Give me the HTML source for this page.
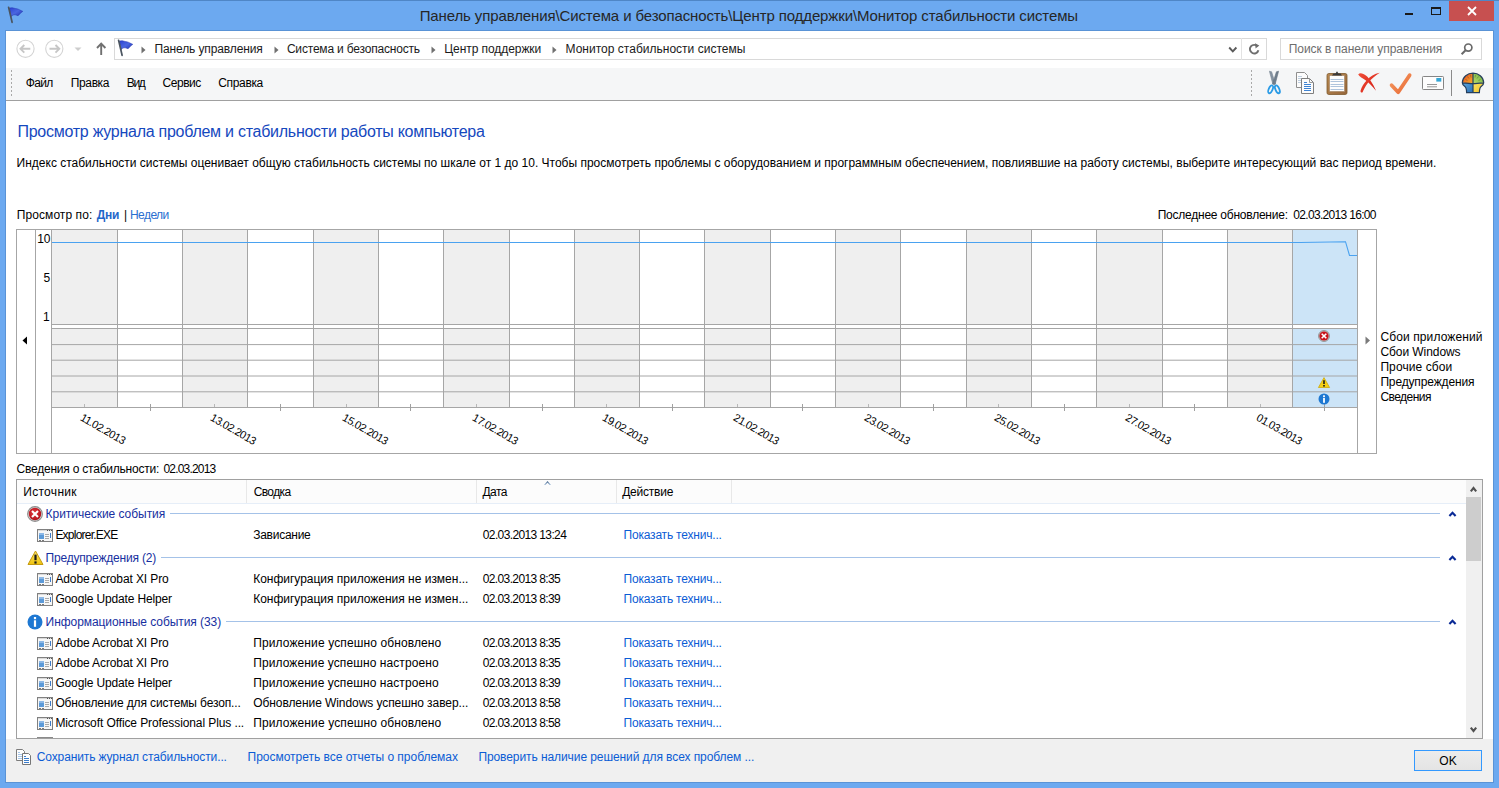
<!DOCTYPE html><html><head><meta charset="utf-8"><style>
html,body{margin:0;padding:0}
body{width:1499px;height:788px;overflow:hidden;position:relative;background:#6CA9F0;font-family:"Liberation Sans",sans-serif}
.t{position:absolute;white-space:nowrap}
.r{position:absolute}
svg{position:absolute;overflow:visible}
</style></head><body>
<div class="r" style="left:0px;top:0px;width:1499px;height:1px;background:#4F86C6;"></div>
<div class="r" style="left:5px;top:30px;width:1489px;height:753px;background:#5A93D6;"></div>
<div class="r" style="left:6px;top:31px;width:1487px;height:751px;background:#FFFFFF;"></div>
<svg style="left:4px;top:5px" width="20" height="20" viewBox="0 0 20 20">
<defs><linearGradient id="fg1" x1="0" y1="0" x2="1" y2="1"><stop offset="0" stop-color="#2C42D2"/><stop offset="0.5" stop-color="#4A66E0"/><stop offset="1" stop-color="#1E2FB0"/></linearGradient></defs>
<path d="M5.3 3.3 C7.5 2.5 8.5 2.8 10 3.2 C12 3.8 13.5 3.5 15.5 4.8 C17.5 5.8 18 6 18.8 6.3 C17 7.5 15.5 9.5 14 10.7 C12.5 10.3 11.5 9.6 10 9.8 C8.5 10 7.8 11.3 7 11.5 Z" fill="url(#fg1)" stroke="#2233B0" stroke-width="0.5"/>
<path d="M4.6 2.3 L8.1 17.3" stroke="#4B5560" stroke-width="1.7" stroke-linecap="round"/>
</svg>
<div class="t" style="left:419.70px;top:8px;font-size:15px;line-height:15px;color:#262626;letter-spacing:-0.119px;">Панель управления\Система и безопасность\Центр поддержки\Монитор стабильности системы</div>
<div class="r" style="left:1405px;top:13px;width:8px;height:2px;background:#1A1A1A;"></div>
<div class="r" style="left:1431px;top:7px;width:10px;height:8px;background:transparent;box-sizing:border-box;border:1px solid #1A1A1A;border-top-width:2px"></div>
<div class="r" style="left:1449px;top:1px;width:45px;height:20px;background:#C75050;"></div>
<svg style="left:1466px;top:6px" width="12" height="10" viewBox="0 0 12 10">
<path d="M2 1 L10 9 M10 1 L2 9" stroke="#fff" stroke-width="1.8"/></svg>
<svg style="left:15px;top:39px" width="20" height="20" viewBox="0 0 20 20">
<circle cx="10.5" cy="9.8" r="8.6" fill="none" stroke="#D4D4D4" stroke-width="1.1"/>
<path d="M5.5 9.8 H15.3 M9.3 6 L5.5 9.8 L9.3 13.6" fill="none" stroke="#C6C6C6" stroke-width="1.9"/></svg>
<svg style="left:44px;top:39px" width="20" height="20" viewBox="0 0 20 20">
<circle cx="10.3" cy="9.8" r="8.6" fill="none" stroke="#D4D4D4" stroke-width="1.1"/>
<path d="M5.5 9.8 H15.3 M11.5 6 L15.3 9.8 L11.5 13.6" fill="none" stroke="#C6C6C6" stroke-width="1.9"/></svg>
<svg style="left:74px;top:47px" width="9" height="5" viewBox="0 0 9 5"><path d="M0.5 0.5 H7.5 L4 4 Z" fill="#CDCDCD"/></svg>
<svg style="left:96px;top:42px" width="11" height="14" viewBox="0 0 11 14">
<path d="M5.2 13 V2 M1 6 L5.2 1.6 L9.4 6" fill="none" stroke="#707070" stroke-width="1.9"/></svg>
<div class="r" style="left:114px;top:38px;width:1153px;height:22px;background:#fff;box-sizing:border-box;border:1px solid #D9D9D9"></div>
<div class="r" style="left:1241px;top:38px;width:1px;height:22px;background:#E3E3E3;"></div>
<svg style="left:114px;top:38px" width="20" height="20" viewBox="0 0 20 20">
<defs><linearGradient id="fg2" x1="0" y1="0" x2="1" y2="1"><stop offset="0" stop-color="#2C42D2"/><stop offset="0.5" stop-color="#4A66E0"/><stop offset="1" stop-color="#1E2FB0"/></linearGradient></defs>
<path d="M5.3 3.3 C7.5 2.5 8.5 2.8 10 3.2 C12 3.8 13.5 3.5 15.5 4.8 C17.5 5.8 18 6 18.8 6.3 C17 7.5 15.5 9.5 14 10.7 C12.5 10.3 11.5 9.6 10 9.8 C8.5 10 7.8 11.3 7 11.5 Z" fill="url(#fg2)" stroke="#2233B0" stroke-width="0.5"/>
<path d="M4.6 2.3 L8.1 17.3" stroke="#4B5560" stroke-width="1.7" stroke-linecap="round"/>
</svg>
<svg style="left:141px;top:46px" width="6" height="8" viewBox="0 0 6 8"><path d="M0.5 0.5 L4.5 4 L0.5 7.5 Z" fill="#707070"/></svg>
<svg style="left:274px;top:46px" width="6" height="8" viewBox="0 0 6 8"><path d="M0.5 0.5 L4.5 4 L0.5 7.5 Z" fill="#707070"/></svg>
<svg style="left:431px;top:46px" width="6" height="8" viewBox="0 0 6 8"><path d="M0.5 0.5 L4.5 4 L0.5 7.5 Z" fill="#707070"/></svg>
<svg style="left:552px;top:46px" width="6" height="8" viewBox="0 0 6 8"><path d="M0.5 0.5 L4.5 4 L0.5 7.5 Z" fill="#707070"/></svg>
<div class="t" style="left:154.50px;top:43px;font-size:12px;line-height:12px;color:#1A1A1A;letter-spacing:-0.119px;">Панель управления</div>
<div class="t" style="left:286.90px;top:43px;font-size:12px;line-height:12px;color:#1A1A1A;letter-spacing:-0.186px;">Система и безопасность</div>
<div class="t" style="left:444.30px;top:43px;font-size:12px;line-height:12px;color:#1A1A1A;letter-spacing:-0.071px;">Центр поддержки</div>
<div class="t" style="left:565.50px;top:43px;font-size:12px;line-height:12px;color:#1A1A1A;letter-spacing:0.015px;">Монитор стабильности системы</div>
<svg style="left:1228px;top:46px" width="10" height="8" viewBox="0 0 10 8"><path d="M1.2 1.5 L4.8 5.3 L8.4 1.5" fill="none" stroke="#5A5A5A" stroke-width="1.9"/></svg>
<svg style="left:1248px;top:42px" width="13" height="14" viewBox="0 0 13 14">
<path d="M9.6 4.5 A4.3 4.3 0 1 0 10.4 8.2" fill="none" stroke="#6E6E6E" stroke-width="1.9"/>
<path d="M7 1.2 L11.3 3.6 L7.6 6.5 Z" fill="#6E6E6E"/></svg>
<div class="r" style="left:1280px;top:38px;width:202px;height:22px;background:#fff;box-sizing:border-box;border:1px solid #D9D9D9"></div>
<div class="t" style="left:1288.70px;top:43px;font-size:12px;line-height:12px;color:#6D6D6D;letter-spacing:-0.050px;">Поиск в панели управления</div>
<svg style="left:1460px;top:42px" width="14" height="14" viewBox="0 0 14 14">
<circle cx="8.3" cy="5.6" r="3.6" fill="none" stroke="#6A6A6A" stroke-width="1.7"/>
<path d="M5.6 8.3 L1.6 12.3" stroke="#6A6A6A" stroke-width="2"/></svg>
<div class="r" style="left:6px;top:68px;width:1487px;height:32px;background:#F5F6F7;"></div>
<div class="r" style="left:6px;top:100px;width:1487px;height:1px;background:#A0A0A0;"></div>
<div class="r" style="left:11px;top:70px;width:1px;height:2px;background:#A9A9A9;"></div>
<div class="r" style="left:11px;top:74px;width:1px;height:2px;background:#A9A9A9;"></div>
<div class="r" style="left:11px;top:78px;width:1px;height:2px;background:#A9A9A9;"></div>
<div class="r" style="left:11px;top:82px;width:1px;height:2px;background:#A9A9A9;"></div>
<div class="r" style="left:11px;top:86px;width:1px;height:2px;background:#A9A9A9;"></div>
<div class="r" style="left:11px;top:90px;width:1px;height:2px;background:#A9A9A9;"></div>
<div class="r" style="left:11px;top:94px;width:1px;height:2px;background:#A9A9A9;"></div>
<div class="t" style="left:25.80px;top:77px;font-size:12px;line-height:12px;color:#000;letter-spacing:-0.667px;">Файл</div>
<div class="t" style="left:70.80px;top:77px;font-size:12px;line-height:12px;color:#000;letter-spacing:-0.380px;">Правка</div>
<div class="t" style="left:126.70px;top:77px;font-size:12px;line-height:12px;color:#000;letter-spacing:-1.300px;">Вид</div>
<div class="t" style="left:162.50px;top:77px;font-size:12px;line-height:12px;color:#000;letter-spacing:-0.460px;">Сервис</div>
<div class="t" style="left:218.30px;top:77px;font-size:12px;line-height:12px;color:#000;letter-spacing:-0.350px;">Справка</div>
<div class="r" style="left:1251px;top:70px;width:1px;height:2px;background:#A9A9A9;"></div>
<div class="r" style="left:1251px;top:74px;width:1px;height:2px;background:#A9A9A9;"></div>
<div class="r" style="left:1251px;top:78px;width:1px;height:2px;background:#A9A9A9;"></div>
<div class="r" style="left:1251px;top:82px;width:1px;height:2px;background:#A9A9A9;"></div>
<div class="r" style="left:1251px;top:86px;width:1px;height:2px;background:#A9A9A9;"></div>
<div class="r" style="left:1251px;top:90px;width:1px;height:2px;background:#A9A9A9;"></div>
<div class="r" style="left:1251px;top:94px;width:1px;height:2px;background:#A9A9A9;"></div>
<div class="r" style="left:1451px;top:70px;width:1px;height:26px;background:#8A8A8A;"></div>
<div class="t" style="left:17.50px;top:124px;font-size:16px;line-height:16px;color:#1548BE;letter-spacing:-0.263px;">Просмотр журнала проблем и стабильности работы компьютера</div>
<div class="t" style="left:16.60px;top:157px;font-size:12px;line-height:12px;color:#000;letter-spacing:-0.005px;">Индекс стабильности системы оценивает общую стабильность системы по шкале от 1 до 10. Чтобы просмотреть проблемы с оборудованием и программным обеспечением, повлиявшие на работу системы, выберите интересующий вас период времени.</div>
<div class="t" style="left:16.80px;top:209px;font-size:12px;line-height:12px;color:#000;letter-spacing:0.073px;">Просмотр по:</div>
<div class="t" style="left:96.70px;top:209px;font-size:12px;line-height:12px;color:#1F66C9;letter-spacing:-0.250px;font-weight:bold;">Дни</div>
<div class="t" style="left:124.00px;top:209px;font-size:12px;line-height:12px;color:#000;letter-spacing:0.000px;">|</div>
<div class="t" style="left:130.00px;top:209px;font-size:12px;line-height:12px;color:#2A6FD0;letter-spacing:-0.560px;">Недели</div>
<div class="t" style="left:1157.70px;top:209px;font-size:12px;line-height:12px;color:#000;letter-spacing:-0.235px;">Последнее обновление:</div>
<div class="t" style="left:1293.30px;top:209px;font-size:12px;line-height:12px;color:#000;letter-spacing:-0.680px;">02.03.2013 16:00</div>
<div class="r" style="left:16px;top:229px;width:1361px;height:225px;background:#fff;box-sizing:border-box;border:1px solid #A6A6A6"></div>
<div class="r" style="left:35px;top:229px;width:1px;height:225px;background:#A6A6A6;"></div>
<div class="r" style="left:51px;top:229px;width:1px;height:225px;background:#A6A6A6;"></div>
<div class="r" style="left:52px;top:230px;width:65px;height:94px;background:#EFEFEF;"></div>
<div class="r" style="left:52px;top:329px;width:65px;height:78px;background:#EFEFEF;"></div>
<div class="r" style="left:183px;top:230px;width:64px;height:94px;background:#EFEFEF;"></div>
<div class="r" style="left:183px;top:329px;width:64px;height:78px;background:#EFEFEF;"></div>
<div class="r" style="left:314px;top:230px;width:64px;height:94px;background:#EFEFEF;"></div>
<div class="r" style="left:314px;top:329px;width:64px;height:78px;background:#EFEFEF;"></div>
<div class="r" style="left:444px;top:230px;width:65px;height:94px;background:#EFEFEF;"></div>
<div class="r" style="left:444px;top:329px;width:65px;height:78px;background:#EFEFEF;"></div>
<div class="r" style="left:575px;top:230px;width:64px;height:94px;background:#EFEFEF;"></div>
<div class="r" style="left:575px;top:329px;width:64px;height:78px;background:#EFEFEF;"></div>
<div class="r" style="left:705px;top:230px;width:65px;height:94px;background:#EFEFEF;"></div>
<div class="r" style="left:705px;top:329px;width:65px;height:78px;background:#EFEFEF;"></div>
<div class="r" style="left:836px;top:230px;width:64px;height:94px;background:#EFEFEF;"></div>
<div class="r" style="left:836px;top:329px;width:64px;height:78px;background:#EFEFEF;"></div>
<div class="r" style="left:967px;top:230px;width:64px;height:94px;background:#EFEFEF;"></div>
<div class="r" style="left:967px;top:329px;width:64px;height:78px;background:#EFEFEF;"></div>
<div class="r" style="left:1097px;top:230px;width:65px;height:94px;background:#EFEFEF;"></div>
<div class="r" style="left:1097px;top:329px;width:65px;height:78px;background:#EFEFEF;"></div>
<div class="r" style="left:1228px;top:230px;width:64px;height:94px;background:#EFEFEF;"></div>
<div class="r" style="left:1228px;top:329px;width:64px;height:78px;background:#EFEFEF;"></div>
<div class="r" style="left:1293px;top:230px;width:64px;height:94px;background:#CCE4F7;"></div>
<div class="r" style="left:1293px;top:329px;width:64px;height:78px;background:#CCE4F7;"></div>
<div class="r" style="left:117px;top:229px;width:1px;height:178px;background:#A6A6A6;"></div>
<div class="r" style="left:182px;top:229px;width:1px;height:178px;background:#A6A6A6;"></div>
<div class="r" style="left:247px;top:229px;width:1px;height:178px;background:#A6A6A6;"></div>
<div class="r" style="left:313px;top:229px;width:1px;height:178px;background:#A6A6A6;"></div>
<div class="r" style="left:378px;top:229px;width:1px;height:178px;background:#A6A6A6;"></div>
<div class="r" style="left:443px;top:229px;width:1px;height:178px;background:#A6A6A6;"></div>
<div class="r" style="left:509px;top:229px;width:1px;height:178px;background:#A6A6A6;"></div>
<div class="r" style="left:574px;top:229px;width:1px;height:178px;background:#A6A6A6;"></div>
<div class="r" style="left:639px;top:229px;width:1px;height:178px;background:#A6A6A6;"></div>
<div class="r" style="left:704px;top:229px;width:1px;height:178px;background:#A6A6A6;"></div>
<div class="r" style="left:770px;top:229px;width:1px;height:178px;background:#A6A6A6;"></div>
<div class="r" style="left:835px;top:229px;width:1px;height:178px;background:#A6A6A6;"></div>
<div class="r" style="left:900px;top:229px;width:1px;height:178px;background:#A6A6A6;"></div>
<div class="r" style="left:966px;top:229px;width:1px;height:178px;background:#A6A6A6;"></div>
<div class="r" style="left:1031px;top:229px;width:1px;height:178px;background:#A6A6A6;"></div>
<div class="r" style="left:1096px;top:229px;width:1px;height:178px;background:#A6A6A6;"></div>
<div class="r" style="left:1162px;top:229px;width:1px;height:178px;background:#A6A6A6;"></div>
<div class="r" style="left:1227px;top:229px;width:1px;height:178px;background:#A6A6A6;"></div>
<div class="r" style="left:1292px;top:229px;width:1px;height:178px;background:#A6A6A6;"></div>
<div class="r" style="left:1357px;top:229px;width:1px;height:178px;background:#A6A6A6;"></div>
<div class="r" style="left:1357px;top:229px;width:1px;height:225px;background:#A6A6A6;"></div>
<div class="r" style="left:52px;top:324px;width:1305px;height:1px;background:#A6A6A6;"></div>
<div class="r" style="left:52px;top:328px;width:1305px;height:1px;background:#A6A6A6;"></div>
<svg style="left:0;top:0" width="1499" height="788" viewBox="0 0 1499 788"><line x1="52" x2="1357" y1="344.6" y2="344.6" stroke="#A6A6A6" stroke-width="1"/><line x1="52" x2="1357" y1="360.2" y2="360.2" stroke="#A6A6A6" stroke-width="1"/><line x1="52" x2="1357" y1="376.0" y2="376.0" stroke="#A6A6A6" stroke-width="1"/><line x1="52" x2="1357" y1="391.8" y2="391.8" stroke="#A6A6A6" stroke-width="1"/></svg>
<div class="r" style="left:52px;top:407px;width:1305px;height:1px;background:#A6A6A6;"></div>
<div class="r" style="left:84px;top:404px;width:1px;height:3px;background:#B8B8B8;"></div>
<div class="r" style="left:150px;top:404px;width:1px;height:7px;background:#A0A0A0;"></div>
<div class="r" style="left:214px;top:404px;width:1px;height:3px;background:#B8B8B8;"></div>
<div class="r" style="left:280px;top:404px;width:1px;height:7px;background:#A0A0A0;"></div>
<div class="r" style="left:346px;top:404px;width:1px;height:3px;background:#B8B8B8;"></div>
<div class="r" style="left:410px;top:404px;width:1px;height:7px;background:#A0A0A0;"></div>
<div class="r" style="left:476px;top:404px;width:1px;height:3px;background:#B8B8B8;"></div>
<div class="r" style="left:542px;top:404px;width:1px;height:7px;background:#A0A0A0;"></div>
<div class="r" style="left:606px;top:404px;width:1px;height:3px;background:#B8B8B8;"></div>
<div class="r" style="left:672px;top:404px;width:1px;height:7px;background:#A0A0A0;"></div>
<div class="r" style="left:737px;top:404px;width:1px;height:3px;background:#B8B8B8;"></div>
<div class="r" style="left:802px;top:404px;width:1px;height:7px;background:#A0A0A0;"></div>
<div class="r" style="left:868px;top:404px;width:1px;height:3px;background:#B8B8B8;"></div>
<div class="r" style="left:933px;top:404px;width:1px;height:7px;background:#A0A0A0;"></div>
<div class="r" style="left:998px;top:404px;width:1px;height:3px;background:#B8B8B8;"></div>
<div class="r" style="left:1064px;top:404px;width:1px;height:7px;background:#A0A0A0;"></div>
<div class="r" style="left:1129px;top:404px;width:1px;height:3px;background:#B8B8B8;"></div>
<div class="r" style="left:1194px;top:404px;width:1px;height:7px;background:#A0A0A0;"></div>
<div class="r" style="left:1260px;top:404px;width:1px;height:3px;background:#B8B8B8;"></div>
<div class="r" style="left:1324px;top:404px;width:1px;height:7px;background:#A0A0A0;"></div>
<div class="t" style="left:37.30px;top:233px;font-size:12px;line-height:12px;color:#000;letter-spacing:-0.200px;">10</div>
<div class="t" style="left:43.50px;top:272px;font-size:12px;line-height:12px;color:#000;letter-spacing:0.000px;">5</div>
<div class="t" style="left:43.00px;top:311px;font-size:12px;line-height:12px;color:#000;letter-spacing:0.000px;">1</div>
<svg style="left:0px;top:0px" width="1499" height="788" viewBox="0 0 1499 788">
<polyline points="52,242.5 1300,242.5 1345.5,241.7 1349.5,255.5 1357,255.5" fill="none" stroke="#4AA2F0" stroke-width="1.1"/></svg>
<div class="t" style="left:84px;top:412px;font-size:11px;line-height:11px;color:#000;letter-spacing:-0.45px;transform-origin:0 0;transform:rotate(30deg)">11.02.2013</div>
<div class="t" style="left:214px;top:412px;font-size:11px;line-height:11px;color:#000;letter-spacing:-0.45px;transform-origin:0 0;transform:rotate(30deg)">13.02.2013</div>
<div class="t" style="left:346px;top:412px;font-size:11px;line-height:11px;color:#000;letter-spacing:-0.45px;transform-origin:0 0;transform:rotate(30deg)">15.02.2013</div>
<div class="t" style="left:476px;top:412px;font-size:11px;line-height:11px;color:#000;letter-spacing:-0.45px;transform-origin:0 0;transform:rotate(30deg)">17.02.2013</div>
<div class="t" style="left:606px;top:412px;font-size:11px;line-height:11px;color:#000;letter-spacing:-0.45px;transform-origin:0 0;transform:rotate(30deg)">19.02.2013</div>
<div class="t" style="left:737px;top:412px;font-size:11px;line-height:11px;color:#000;letter-spacing:-0.45px;transform-origin:0 0;transform:rotate(30deg)">21.02.2013</div>
<div class="t" style="left:868px;top:412px;font-size:11px;line-height:11px;color:#000;letter-spacing:-0.45px;transform-origin:0 0;transform:rotate(30deg)">23.02.2013</div>
<div class="t" style="left:998px;top:412px;font-size:11px;line-height:11px;color:#000;letter-spacing:-0.45px;transform-origin:0 0;transform:rotate(30deg)">25.02.2013</div>
<div class="t" style="left:1129px;top:412px;font-size:11px;line-height:11px;color:#000;letter-spacing:-0.45px;transform-origin:0 0;transform:rotate(30deg)">27.02.2013</div>
<div class="t" style="left:1260px;top:412px;font-size:11px;line-height:11px;color:#000;letter-spacing:-0.45px;transform-origin:0 0;transform:rotate(30deg)">01.03.2013</div>
<svg style="left:22px;top:336px" width="6" height="9" viewBox="0 0 6 9"><path d="M5 0.5 V8.5 L0.5 4.5 Z" fill="#000"/></svg>
<svg style="left:1365px;top:336px" width="6" height="9" viewBox="0 0 6 9"><path d="M0.5 0.5 V8.5 L5 4.5 Z" fill="#7A7A7A"/></svg>
<div class="t" style="left:1380.40px;top:331px;font-size:12px;line-height:12px;color:#000;letter-spacing:0.114px;">Сбои приложений</div>
<div class="t" style="left:1380.40px;top:346px;font-size:12px;line-height:12px;color:#000;letter-spacing:-0.064px;">Сбои Windows</div>
<div class="t" style="left:1380.40px;top:361px;font-size:12px;line-height:12px;color:#000;letter-spacing:0.100px;">Прочие сбои</div>
<div class="t" style="left:1380.40px;top:376px;font-size:12px;line-height:12px;color:#000;letter-spacing:-0.146px;">Предупреждения</div>
<div class="t" style="left:1380.40px;top:391px;font-size:12px;line-height:12px;color:#000;letter-spacing:-0.529px;">Сведения</div>
<div class="t" style="left:16.60px;top:463px;font-size:12px;line-height:12px;color:#000;letter-spacing:-0.226px;">Сведения о стабильности:</div>
<div class="t" style="left:163.40px;top:463px;font-size:12px;line-height:12px;color:#000;letter-spacing:-0.800px;">02.03.2013</div>
<div class="r" style="left:16px;top:479px;width:1467px;height:260px;background:#fff;box-sizing:border-box;border:1px solid #A0A0A0"></div>
<div class="r" style="left:17px;top:480px;width:1449px;height:23px;background:#FCFCFC;"></div>
<div class="r" style="left:17px;top:503px;width:1449px;height:1px;background:#E6EEF8;"></div>
<div class="r" style="left:246px;top:480px;width:1px;height:23px;background:#E8E8E8;"></div>
<div class="r" style="left:476px;top:480px;width:1px;height:23px;background:#E8E8E8;"></div>
<div class="r" style="left:616px;top:480px;width:1px;height:23px;background:#E8E8E8;"></div>
<div class="r" style="left:731px;top:480px;width:1px;height:23px;background:#E8E8E8;"></div>
<div class="t" style="left:23.20px;top:486px;font-size:12px;line-height:12px;color:#000;letter-spacing:0.314px;">Источник</div>
<div class="t" style="left:253.70px;top:486px;font-size:12px;line-height:12px;color:#000;letter-spacing:-0.620px;">Сводка</div>
<div class="t" style="left:482.60px;top:486px;font-size:12px;line-height:12px;color:#000;letter-spacing:-0.600px;">Дата</div>
<div class="t" style="left:622.20px;top:486px;font-size:12px;line-height:12px;color:#000;letter-spacing:-0.229px;">Действие</div>
<svg style="left:543px;top:480px" width="9" height="6" viewBox="0 0 9 6"><defs><linearGradient id="sa" x1="0" y1="0" x2="0" y2="1"><stop offset="0" stop-color="#3F5F86"/><stop offset="1" stop-color="#A9C3DE"/></linearGradient></defs><path d="M1 5 L4.5 1 L8 5 L6.6 5 L4.5 2.8 L2.4 5 Z" fill="url(#sa)"/></svg>
<div class="r" style="left:1466px;top:480px;width:16px;height:258px;background:#F0F0F0;"></div>
<div class="r" style="left:1466px;top:497px;width:15px;height:64px;background:#CDCDCD;"></div>
<svg style="left:1468px;top:483px" width="12" height="12" viewBox="0 0 12 12"><path d="M2.8 8.3 L5.5 5 L8.2 8.3" fill="none" stroke="#505050" stroke-width="2.1"/></svg>
<svg style="left:1468px;top:724px" width="12" height="12" viewBox="0 0 12 12"><path d="M2.8 3.7 L5.5 7 L8.2 3.7" fill="none" stroke="#505050" stroke-width="2.1"/></svg>
<svg style="left:27px;top:506px" width="16" height="16" viewBox="0 0 16 16">
<defs><radialGradient id="eg" cx="0.45" cy="0.4" r="0.6"><stop offset="0" stop-color="#E43A3F"/><stop offset="1" stop-color="#B0101A"/></radialGradient></defs>
<circle cx="8" cy="8" r="7.4" fill="#D8D8D8" stroke="#8E8E8E" stroke-width="1.1"/>
<circle cx="8" cy="8" r="6.2" fill="url(#eg)"/>
<path d="M5 5 L11 11 M11 5 L5 11" stroke="#fff" stroke-width="2.1"/></svg>
<div class="t" style="left:45.60px;top:508px;font-size:12px;line-height:12px;color:#172FA0;letter-spacing:-0.044px;">Критические события</div>
<div class="r" style="left:170px;top:513px;width:1270px;height:1px;background:#A4C2E8;"></div>
<svg style="left:1447px;top:510px" width="11" height="8" viewBox="0 0 11 8"><path d="M2.4 5.9 L5.5 2.7 L8.6 5.9" fill="none" stroke="#0A2A96" stroke-width="2.1"/></svg>
<svg style="left:37px;top:529px" width="16" height="14" viewBox="0 0 16 14" shape-rendering="crispEdges">
<rect x="0.5" y="0.5" width="15" height="12" fill="#F7F7F7" stroke="#808080"/>
<rect x="1" y="1" width="14" height="1" fill="#DADADA"/>
<rect x="10" y="1" width="1" height="1" fill="#555"/><rect x="12" y="1" width="1" height="1" fill="#555"/><rect x="14" y="1" width="1" height="1" fill="#555"/>
<rect x="2" y="4" width="5" height="6" fill="#5C9AD8"/>
<rect x="2" y="4" width="5" height="2" fill="#8CB8E6"/>
<rect x="8" y="5" width="4" height="1" fill="#A9A9A9"/><rect x="8" y="7" width="4" height="1" fill="#A9A9A9"/><rect x="8" y="9" width="4" height="1" fill="#A9A9A9"/>
<rect x="13" y="4" width="1" height="5" fill="#3D7CCB"/>
<rect x="2" y="11" width="2" height="1" fill="#777"/><rect x="5" y="11" width="2" height="1" fill="#777"/>
</svg>
<div class="t" style="left:55.40px;top:529px;font-size:12px;line-height:12px;color:#000;letter-spacing:-0.773px;">Explorer.EXE</div>
<div class="t" style="left:253.20px;top:529px;font-size:12px;line-height:12px;color:#000;letter-spacing:-0.262px;">Зависание</div>
<div class="t" style="left:482.80px;top:529px;font-size:12px;line-height:12px;color:#000;letter-spacing:-0.627px;">02.03.2013 13:24</div>
<div class="t" style="left:623.50px;top:529px;font-size:12px;line-height:12px;color:#0B5CD5;letter-spacing:-0.194px;">Показать технич...</div>
<svg style="left:27px;top:550px" width="17" height="16" viewBox="0 0 17 16">
<defs><linearGradient id="wg" x1="0" y1="0" x2="0" y2="1"><stop offset="0" stop-color="#FBE66A"/><stop offset="1" stop-color="#EFC20C"/></linearGradient></defs><path d="M8.5 1 L16 14.5 H1 Z" fill="url(#wg)" stroke="#C49A10" stroke-width="1" stroke-linejoin="round"/>
<path d="M8.5 4.6 V10.2" stroke="#1A1A1A" stroke-width="2.2"/><rect x="7.4" y="11.4" width="2.2" height="2.2" fill="#1A1A1A"/></svg>
<div class="t" style="left:45.60px;top:552px;font-size:12px;line-height:12px;color:#172FA0;letter-spacing:-0.200px;">Предупреждения (2)</div>
<div class="r" style="left:161px;top:557px;width:1279px;height:1px;background:#A4C2E8;"></div>
<svg style="left:1447px;top:554px" width="11" height="8" viewBox="0 0 11 8"><path d="M2.4 5.9 L5.5 2.7 L8.6 5.9" fill="none" stroke="#0A2A96" stroke-width="2.1"/></svg>
<svg style="left:37px;top:573px" width="16" height="14" viewBox="0 0 16 14" shape-rendering="crispEdges">
<rect x="0.5" y="0.5" width="15" height="12" fill="#F7F7F7" stroke="#808080"/>
<rect x="1" y="1" width="14" height="1" fill="#DADADA"/>
<rect x="10" y="1" width="1" height="1" fill="#555"/><rect x="12" y="1" width="1" height="1" fill="#555"/><rect x="14" y="1" width="1" height="1" fill="#555"/>
<rect x="2" y="4" width="5" height="6" fill="#5C9AD8"/>
<rect x="2" y="4" width="5" height="2" fill="#8CB8E6"/>
<rect x="8" y="5" width="4" height="1" fill="#A9A9A9"/><rect x="8" y="7" width="4" height="1" fill="#A9A9A9"/><rect x="8" y="9" width="4" height="1" fill="#A9A9A9"/>
<rect x="13" y="4" width="1" height="5" fill="#3D7CCB"/>
<rect x="2" y="11" width="2" height="1" fill="#777"/><rect x="5" y="11" width="2" height="1" fill="#777"/>
</svg>
<div class="t" style="left:55.40px;top:573px;font-size:12px;line-height:12px;color:#000;letter-spacing:-0.111px;">Adobe Acrobat XI Pro</div>
<div class="t" style="left:253.20px;top:573px;font-size:12px;line-height:12px;color:#000;letter-spacing:-0.015px;">Конфигурация приложения не измен...</div>
<div class="t" style="left:482.80px;top:573px;font-size:12px;line-height:12px;color:#000;letter-spacing:-0.636px;">02.03.2013 8:35</div>
<div class="t" style="left:623.50px;top:573px;font-size:12px;line-height:12px;color:#0B5CD5;letter-spacing:-0.194px;">Показать технич...</div>
<svg style="left:37px;top:593px" width="16" height="14" viewBox="0 0 16 14" shape-rendering="crispEdges">
<rect x="0.5" y="0.5" width="15" height="12" fill="#F7F7F7" stroke="#808080"/>
<rect x="1" y="1" width="14" height="1" fill="#DADADA"/>
<rect x="10" y="1" width="1" height="1" fill="#555"/><rect x="12" y="1" width="1" height="1" fill="#555"/><rect x="14" y="1" width="1" height="1" fill="#555"/>
<rect x="2" y="4" width="5" height="6" fill="#5C9AD8"/>
<rect x="2" y="4" width="5" height="2" fill="#8CB8E6"/>
<rect x="8" y="5" width="4" height="1" fill="#A9A9A9"/><rect x="8" y="7" width="4" height="1" fill="#A9A9A9"/><rect x="8" y="9" width="4" height="1" fill="#A9A9A9"/>
<rect x="13" y="4" width="1" height="5" fill="#3D7CCB"/>
<rect x="2" y="11" width="2" height="1" fill="#777"/><rect x="5" y="11" width="2" height="1" fill="#777"/>
</svg>
<div class="t" style="left:55.40px;top:593px;font-size:12px;line-height:12px;color:#000;letter-spacing:-0.147px;">Google Update Helper</div>
<div class="t" style="left:253.20px;top:593px;font-size:12px;line-height:12px;color:#000;letter-spacing:-0.015px;">Конфигурация приложения не измен...</div>
<div class="t" style="left:482.80px;top:593px;font-size:12px;line-height:12px;color:#000;letter-spacing:-0.636px;">02.03.2013 8:39</div>
<div class="t" style="left:623.50px;top:593px;font-size:12px;line-height:12px;color:#0B5CD5;letter-spacing:-0.194px;">Показать технич...</div>
<svg style="left:27px;top:614px" width="16" height="16" viewBox="0 0 16 16">
<circle cx="8" cy="8" r="7.5" fill="#1E78D2"/>
<rect x="6.9" y="3" width="2.2" height="2.2" fill="#fff"/><rect x="6.9" y="6.3" width="2.2" height="6.5" fill="#fff"/></svg>
<div class="t" style="left:45.60px;top:616px;font-size:12px;line-height:12px;color:#172FA0;letter-spacing:-0.062px;">Информационные события (33)</div>
<div class="r" style="left:226px;top:621px;width:1214px;height:1px;background:#A4C2E8;"></div>
<svg style="left:1447px;top:618px" width="11" height="8" viewBox="0 0 11 8"><path d="M2.4 5.9 L5.5 2.7 L8.6 5.9" fill="none" stroke="#0A2A96" stroke-width="2.1"/></svg>
<svg style="left:37px;top:637px" width="16" height="14" viewBox="0 0 16 14" shape-rendering="crispEdges">
<rect x="0.5" y="0.5" width="15" height="12" fill="#F7F7F7" stroke="#808080"/>
<rect x="1" y="1" width="14" height="1" fill="#DADADA"/>
<rect x="10" y="1" width="1" height="1" fill="#555"/><rect x="12" y="1" width="1" height="1" fill="#555"/><rect x="14" y="1" width="1" height="1" fill="#555"/>
<rect x="2" y="4" width="5" height="6" fill="#5C9AD8"/>
<rect x="2" y="4" width="5" height="2" fill="#8CB8E6"/>
<rect x="8" y="5" width="4" height="1" fill="#A9A9A9"/><rect x="8" y="7" width="4" height="1" fill="#A9A9A9"/><rect x="8" y="9" width="4" height="1" fill="#A9A9A9"/>
<rect x="13" y="4" width="1" height="5" fill="#3D7CCB"/>
<rect x="2" y="11" width="2" height="1" fill="#777"/><rect x="5" y="11" width="2" height="1" fill="#777"/>
</svg>
<div class="t" style="left:55.40px;top:637px;font-size:12px;line-height:12px;color:#000;letter-spacing:-0.111px;">Adobe Acrobat XI Pro</div>
<div class="t" style="left:253.20px;top:637px;font-size:12px;line-height:12px;color:#000;letter-spacing:0.115px;">Приложение успешно обновлено</div>
<div class="t" style="left:482.80px;top:637px;font-size:12px;line-height:12px;color:#000;letter-spacing:-0.636px;">02.03.2013 8:35</div>
<div class="t" style="left:623.50px;top:637px;font-size:12px;line-height:12px;color:#0B5CD5;letter-spacing:-0.194px;">Показать технич...</div>
<svg style="left:37px;top:657px" width="16" height="14" viewBox="0 0 16 14" shape-rendering="crispEdges">
<rect x="0.5" y="0.5" width="15" height="12" fill="#F7F7F7" stroke="#808080"/>
<rect x="1" y="1" width="14" height="1" fill="#DADADA"/>
<rect x="10" y="1" width="1" height="1" fill="#555"/><rect x="12" y="1" width="1" height="1" fill="#555"/><rect x="14" y="1" width="1" height="1" fill="#555"/>
<rect x="2" y="4" width="5" height="6" fill="#5C9AD8"/>
<rect x="2" y="4" width="5" height="2" fill="#8CB8E6"/>
<rect x="8" y="5" width="4" height="1" fill="#A9A9A9"/><rect x="8" y="7" width="4" height="1" fill="#A9A9A9"/><rect x="8" y="9" width="4" height="1" fill="#A9A9A9"/>
<rect x="13" y="4" width="1" height="5" fill="#3D7CCB"/>
<rect x="2" y="11" width="2" height="1" fill="#777"/><rect x="5" y="11" width="2" height="1" fill="#777"/>
</svg>
<div class="t" style="left:55.40px;top:657px;font-size:12px;line-height:12px;color:#000;letter-spacing:-0.111px;">Adobe Acrobat XI Pro</div>
<div class="t" style="left:253.20px;top:657px;font-size:12px;line-height:12px;color:#000;letter-spacing:0.085px;">Приложение успешно настроено</div>
<div class="t" style="left:482.80px;top:657px;font-size:12px;line-height:12px;color:#000;letter-spacing:-0.636px;">02.03.2013 8:35</div>
<div class="t" style="left:623.50px;top:657px;font-size:12px;line-height:12px;color:#0B5CD5;letter-spacing:-0.194px;">Показать технич...</div>
<svg style="left:37px;top:677px" width="16" height="14" viewBox="0 0 16 14" shape-rendering="crispEdges">
<rect x="0.5" y="0.5" width="15" height="12" fill="#F7F7F7" stroke="#808080"/>
<rect x="1" y="1" width="14" height="1" fill="#DADADA"/>
<rect x="10" y="1" width="1" height="1" fill="#555"/><rect x="12" y="1" width="1" height="1" fill="#555"/><rect x="14" y="1" width="1" height="1" fill="#555"/>
<rect x="2" y="4" width="5" height="6" fill="#5C9AD8"/>
<rect x="2" y="4" width="5" height="2" fill="#8CB8E6"/>
<rect x="8" y="5" width="4" height="1" fill="#A9A9A9"/><rect x="8" y="7" width="4" height="1" fill="#A9A9A9"/><rect x="8" y="9" width="4" height="1" fill="#A9A9A9"/>
<rect x="13" y="4" width="1" height="5" fill="#3D7CCB"/>
<rect x="2" y="11" width="2" height="1" fill="#777"/><rect x="5" y="11" width="2" height="1" fill="#777"/>
</svg>
<div class="t" style="left:55.40px;top:677px;font-size:12px;line-height:12px;color:#000;letter-spacing:-0.147px;">Google Update Helper</div>
<div class="t" style="left:253.20px;top:677px;font-size:12px;line-height:12px;color:#000;letter-spacing:0.085px;">Приложение успешно настроено</div>
<div class="t" style="left:482.80px;top:677px;font-size:12px;line-height:12px;color:#000;letter-spacing:-0.636px;">02.03.2013 8:39</div>
<div class="t" style="left:623.50px;top:677px;font-size:12px;line-height:12px;color:#0B5CD5;letter-spacing:-0.194px;">Показать технич...</div>
<svg style="left:37px;top:697px" width="16" height="14" viewBox="0 0 16 14" shape-rendering="crispEdges">
<rect x="0.5" y="0.5" width="15" height="12" fill="#F7F7F7" stroke="#808080"/>
<rect x="1" y="1" width="14" height="1" fill="#DADADA"/>
<rect x="10" y="1" width="1" height="1" fill="#555"/><rect x="12" y="1" width="1" height="1" fill="#555"/><rect x="14" y="1" width="1" height="1" fill="#555"/>
<rect x="2" y="4" width="5" height="6" fill="#5C9AD8"/>
<rect x="2" y="4" width="5" height="2" fill="#8CB8E6"/>
<rect x="8" y="5" width="4" height="1" fill="#A9A9A9"/><rect x="8" y="7" width="4" height="1" fill="#A9A9A9"/><rect x="8" y="9" width="4" height="1" fill="#A9A9A9"/>
<rect x="13" y="4" width="1" height="5" fill="#3D7CCB"/>
<rect x="2" y="11" width="2" height="1" fill="#777"/><rect x="5" y="11" width="2" height="1" fill="#777"/>
</svg>
<div class="t" style="left:55.40px;top:697px;font-size:12px;line-height:12px;color:#000;letter-spacing:-0.120px;">Обновление для системы безоп...</div>
<div class="t" style="left:253.20px;top:697px;font-size:12px;line-height:12px;color:#000;letter-spacing:-0.074px;">Обновление Windows успешно завер...</div>
<div class="t" style="left:482.80px;top:697px;font-size:12px;line-height:12px;color:#000;letter-spacing:-0.636px;">02.03.2013 8:58</div>
<div class="t" style="left:623.50px;top:697px;font-size:12px;line-height:12px;color:#0B5CD5;letter-spacing:-0.194px;">Показать технич...</div>
<svg style="left:37px;top:717px" width="16" height="14" viewBox="0 0 16 14" shape-rendering="crispEdges">
<rect x="0.5" y="0.5" width="15" height="12" fill="#F7F7F7" stroke="#808080"/>
<rect x="1" y="1" width="14" height="1" fill="#DADADA"/>
<rect x="10" y="1" width="1" height="1" fill="#555"/><rect x="12" y="1" width="1" height="1" fill="#555"/><rect x="14" y="1" width="1" height="1" fill="#555"/>
<rect x="2" y="4" width="5" height="6" fill="#5C9AD8"/>
<rect x="2" y="4" width="5" height="2" fill="#8CB8E6"/>
<rect x="8" y="5" width="4" height="1" fill="#A9A9A9"/><rect x="8" y="7" width="4" height="1" fill="#A9A9A9"/><rect x="8" y="9" width="4" height="1" fill="#A9A9A9"/>
<rect x="13" y="4" width="1" height="5" fill="#3D7CCB"/>
<rect x="2" y="11" width="2" height="1" fill="#777"/><rect x="5" y="11" width="2" height="1" fill="#777"/>
</svg>
<div class="t" style="left:55.40px;top:717px;font-size:12px;line-height:12px;color:#000;letter-spacing:-0.100px;">Microsoft Office Professional Plus ...</div>
<div class="t" style="left:253.20px;top:717px;font-size:12px;line-height:12px;color:#000;letter-spacing:0.115px;">Приложение успешно обновлено</div>
<div class="t" style="left:482.80px;top:717px;font-size:12px;line-height:12px;color:#000;letter-spacing:-0.636px;">02.03.2013 8:58</div>
<div class="t" style="left:623.50px;top:717px;font-size:12px;line-height:12px;color:#0B5CD5;letter-spacing:-0.194px;">Показать технич...</div>
<div class="r" style="left:37px;top:737px;width:16px;height:1px;background:#8A8A8A;"></div>
<div class="r" style="left:6px;top:739px;width:1487px;height:43px;background:#F0F0F0;"></div>
<svg style="left:15px;top:748px" width="18" height="18" viewBox="0 0 18 18">
<path d="M1.5 1.5 H7.5 L9.5 3.5 V12.5 H1.5 Z" fill="#FDFDFD" stroke="#7C7C7C" stroke-width="1"/>
<path d="M3 4.5 H5 M3 6.5 H7 M3 8.5 H7 M3 10.5 H7" stroke="#A6C6EA" stroke-width="1"/>
<path d="M7.5 5.5 H13.5 L15.5 7.5 V16.5 H7.5 Z" fill="#FDFDFD" stroke="#767676" stroke-width="1"/>
<path d="M9 8.5 H11 M9 10.5 H14 M9 12.5 H14 M9 14.5 H14" stroke="#3A7CCB" stroke-width="1"/>
</svg>
<div class="t" style="left:36.70px;top:751px;font-size:12px;line-height:12px;color:#0B5CD5;letter-spacing:-0.110px;">Сохранить журнал стабильности...</div>
<div class="t" style="left:247.60px;top:751px;font-size:12px;line-height:12px;color:#0B5CD5;letter-spacing:-0.021px;">Просмотреть все отчеты о проблемах</div>
<div class="t" style="left:478.40px;top:751px;font-size:12px;line-height:12px;color:#0B5CD5;letter-spacing:-0.082px;">Проверить наличие решений для всех проблем ...</div>
<div class="r" style="left:1414px;top:750px;width:68px;height:21px;background:linear-gradient(#ECECEC,#E4E4E4);box-sizing:border-box;border:1px solid #3399FF"></div>
<div class="t" style="left:1414px;top:755px;font-size:12px;line-height:12px;color:#000;width:68px;text-align:center">OK</div>
<svg style="left:1265px;top:70px" width="18" height="26" viewBox="0 0 18 26">
<path d="M4.4 1.2 L6.6 1.8 L10.4 13.8 L7.9 14.4 Z" fill="#8593A1" stroke="#7A8896" stroke-width="0.6" stroke-linejoin="round"/>
<path d="M13.6 1.2 L11.4 1.8 L7.6 13.8 L10.1 14.4 Z" fill="#6F7D8C" stroke="#66737F" stroke-width="0.6" stroke-linejoin="round"/>
<ellipse cx="5.6" cy="19.3" rx="1.9" ry="4.2" transform="rotate(24 5.6 19.3)" fill="none" stroke="#2A9BE6" stroke-width="1.8"/>
<ellipse cx="12.4" cy="19.3" rx="1.9" ry="4.2" transform="rotate(-24 12.4 19.3)" fill="none" stroke="#2A9BE6" stroke-width="1.8"/>
</svg>
<svg style="left:1295px;top:71px" width="21" height="24" viewBox="0 0 21 24">
<path d="M1.5 1.5 H9.5 L12.5 4.5 V16.5 H1.5 Z" fill="#FCFCFC" stroke="#8F8F8F" stroke-width="1"/>
<path d="M3 5.5 H7 M3 7.5 H9 M3 9.5 H9 M3 11.5 H9" stroke="#BFCFE0" stroke-width="1"/>
<path d="M6.5 7.5 H14.5 L18.5 11.5 V22.5 H6.5 Z" fill="#FCFCFC" stroke="#7F7F7F" stroke-width="1"/>
<path d="M14.5 7.5 V11.5 H18.5" fill="none" stroke="#9A9A9A" stroke-width="1"/>
<path d="M9 11.5 H12 M9 13.5 H16 M9 15.5 H16 M9 17.5 H16 M9 19.5 H16" stroke="#3F84D4" stroke-width="1"/>
</svg>
<svg style="left:1326px;top:70px" width="22" height="25" viewBox="0 0 22 25">
<defs><linearGradient id="cbg" x1="0" y1="0" x2="1" y2="1"><stop offset="0" stop-color="#B98A52"/><stop offset="1" stop-color="#95653A"/></linearGradient></defs>
<rect x="1" y="3.5" width="20" height="21" rx="1.8" fill="url(#cbg)" stroke="#7F5A2E" stroke-width="0.8"/>
<rect x="3.5" y="5.5" width="15" height="16" fill="#FDFDFD" stroke="#A08060" stroke-width="0.6"/>
<path d="M4.5 9.5 H17.5 M4.5 11.5 H17.5 M4.5 14.5 H17.5 M4.5 16.5 H17.5 M4.5 19.5 H17.5" stroke="#AFC4DC" stroke-width="1"/>
<path d="M6 5.5 L7.5 3.5 H9.5 L11 1.3 L12.5 3.5 H14.5 L16 5.5 Z" fill="#3A3A3A"/>
</svg>
<svg style="left:1357px;top:71px" width="24" height="23" viewBox="0 0 24 23">
<defs><linearGradient id="rx" x1="0" y1="0" x2="1" y2="1"><stop offset="0" stop-color="#F0503A"/><stop offset="1" stop-color="#D41A10"/></linearGradient></defs>
<path d="M1.2 3.4 C2.8 1.4 6.2 2.3 9.2 4.8 C12.4 7.5 15.8 12.2 19 19.8 C15.2 15.2 12 11.8 8.6 9.2 C5.6 7.1 2.4 5.8 1.2 3.4 Z" fill="url(#rx)"/>
<path d="M22.8 1.8 C17.2 2.8 13 5.8 10 9 C7 12.2 4.6 16 3.6 19.4 C3.2 21 4.4 22.2 5.6 21.2 C6.6 19.2 8.2 15.2 11.2 11.6 C14.2 8.1 18.2 4.6 22.8 1.8 Z" fill="url(#rx)"/>
</svg>
<svg style="left:1389px;top:72px" width="24" height="23" viewBox="0 0 24 23">
<defs><linearGradient id="ck" x1="0" y1="0" x2="1" y2="1"><stop offset="0" stop-color="#F59A62"/><stop offset="1" stop-color="#E86A35"/></linearGradient></defs><path d="M2.6 13.2 L9.2 20.2 L20.6 3.2" fill="none" stroke="url(#ck)" stroke-width="3.8" stroke-linecap="round" stroke-linejoin="round"/>
</svg>
<svg style="left:1421px;top:75px" width="24" height="16" viewBox="0 0 24 16">
<rect x="1.5" y="1.5" width="21" height="13" rx="0.8" fill="#FDFDFD" stroke="#858585" stroke-width="1"/>
<rect x="15.3" y="3" width="5" height="3.6" fill="#33A6D6"/>
<path d="M6 9.5 H16 M6 11.8 H16" stroke="#8A8A8A" stroke-width="0.9"/>
</svg>
<svg style="left:1461px;top:72px" width="24" height="22" viewBox="0 0 24 22">
<defs>
<linearGradient id="sh1" x1="0" y1="0" x2="1" y2="1"><stop offset="0" stop-color="#E8401E"/><stop offset="1" stop-color="#F7B52C"/></linearGradient>
<linearGradient id="sh2" x1="1" y1="0" x2="0" y2="1"><stop offset="0" stop-color="#6DB33F"/><stop offset="1" stop-color="#B5D96A"/></linearGradient>
<linearGradient id="sh3" x1="0" y1="0" x2="1" y2="1"><stop offset="0" stop-color="#5FA9DF"/><stop offset="1" stop-color="#2A6FB5"/></linearGradient>
<linearGradient id="sh4" x1="0" y1="0" x2="1" y2="1"><stop offset="0" stop-color="#FBE36A"/><stop offset="1" stop-color="#F2C21B"/></linearGradient>
</defs>
<path d="M12 1.2 C6.5 1.2 1.6 5 1.3 10.8 L12 11.6 Z" fill="url(#sh1)"/>
<path d="M12 1.2 C17.5 1.2 22.4 5 22.7 10.8 L12 11.6 Z" fill="url(#sh2)"/>
<path d="M1.3 10.8 C1.3 12.3 2.2 13.2 3.6 14.2 C5.2 15.3 5.6 17.3 5.6 20.6 L12 20.6 V11.6 Z" fill="url(#sh3)"/>
<path d="M22.7 10.8 C22.7 12.3 21.8 13.2 20.4 14.2 C18.8 15.3 18.4 17.3 18.4 20.6 L12 20.6 V11.6 Z" fill="url(#sh4)"/>
<path d="M12 1.2 C6.5 1.2 1.6 5 1.3 10.8 C1.3 12.3 2.2 13.2 3.6 14.2 C5.2 15.3 5.6 17.3 5.6 20.6 L18.4 20.6 C18.4 17.3 18.8 15.3 20.4 14.2 C21.8 13.2 22.7 12.3 22.7 10.8 C22.4 5 17.5 1.2 12 1.2 Z M12 1.2 V20.6 M1.5 10.8 C5 11.2 8.5 11.6 12 11.6 C15.5 11.6 19 11.2 22.5 10.8" fill="none" stroke="#263F5C" stroke-width="1.2"/>
<path d="M4.5 7.5 L6.5 8.5 M6.5 4.5 L8 6.5 M9.5 3 L10 5.5 M19.5 7.5 L17.5 8.5 M17.5 4.5 L16 6.5 M14.5 3 L14 5.5" stroke="#2E4A2E" stroke-width="0.7" opacity="0.5"/>
</svg>
<svg style="left:1318px;top:330px" width="12" height="12" viewBox="0 0 12 12">
<circle cx="6" cy="6" r="5.5" fill="#C0C0C0" stroke="#8A8A8A" stroke-width="0.8"/>
<circle cx="6" cy="6" r="4.6" fill="#C8141C"/>
<path d="M3.7 3.7 L8.3 8.3 M8.3 3.7 L3.7 8.3" stroke="#fff" stroke-width="1.6"/></svg>
<svg style="left:1318px;top:377px" width="12" height="11" viewBox="0 0 12 11">
<path d="M6 0.6 L11.6 10.5 H0.4 Z" fill="#F4D018" stroke="#C9A300" stroke-width="0.7" stroke-linejoin="round"/>
<path d="M6 3.3 V7" stroke="#1A1A1A" stroke-width="1.6"/><rect x="5.2" y="8" width="1.6" height="1.6" fill="#1A1A1A"/></svg>
<svg style="left:1318px;top:393px" width="12" height="12" viewBox="0 0 12 12">
<circle cx="6" cy="6" r="5.5" fill="#1E78D2"/>
<rect x="5.1" y="2.3" width="1.8" height="1.7" fill="#fff"/><rect x="5.1" y="4.8" width="1.8" height="5" fill="#fff"/></svg>
<div class="r" style="left:1324px;top:406px;width:1px;height:5px;background:#A0A0A0;"></div>
</body></html>
